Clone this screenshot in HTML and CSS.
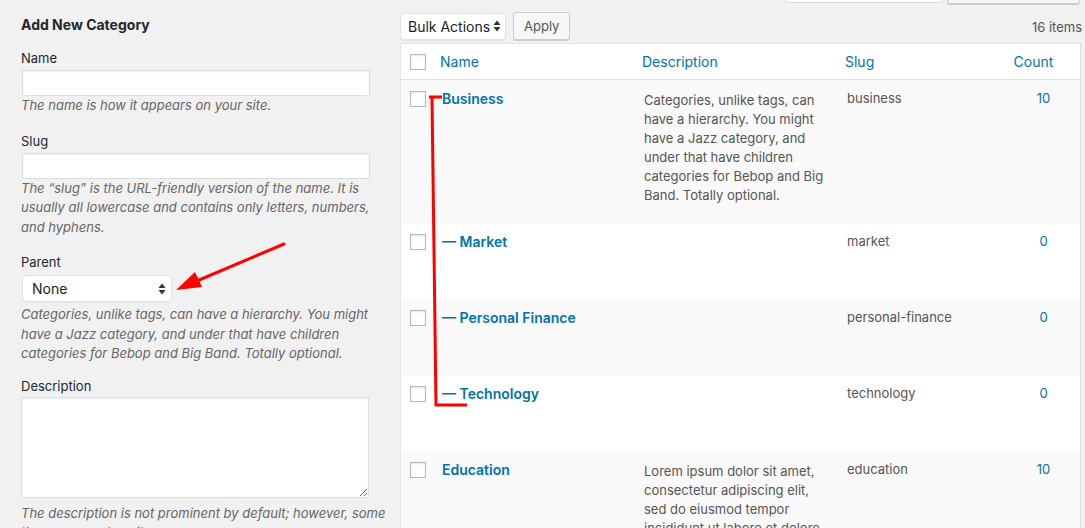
FILE: index.html
```html
<!DOCTYPE html>
<html lang="en">
<head>
  <meta charset="UTF-8">
  <title>Categories</title>
  <link rel="stylesheet" href="styles.css">
</head>
<body>
  <div class="page">
    <div class="col-left">
      <h2 class="form-title">Add New Category</h2>

      <div class="form-field">
        <label>Name</label>
        <input type="text" class="text-input">
        <p class="field-desc">The name is how it appears on your site.</p>
      </div>

      <div class="form-field">
        <label>Slug</label>
        <input type="text" class="text-input">
        <p class="field-desc">The “slug” is the URL-friendly version of the name. It is usually all lowercase and contains only letters, numbers, and hyphens.</p>
      </div>

      <div class="form-field">
        <label>Parent</label>
        <div class="fake-select parent-select">
          <span>None</span>
          <svg class="updown" width="8" height="12" viewBox="0 0 8 12"><path d="M4 0.5 L7.5 5 L0.5 5 Z M4 11.5 L7.5 7 L0.5 7 Z" fill="#333"/></svg>
        </div>
        <p class="field-desc field-desc-sel">Categories, unlike tags, can have a hierarchy. You might have a Jazz category, and under that have children categories for Bebop and Big Band. Totally optional.</p>
      </div>

      <div class="form-field field-area">
        <label>Description</label>
        <textarea class="text-area"></textarea>
        <p class="field-desc field-desc-area">The description is not prominent by default; however, some themes may show it.</p>
      </div>
    </div>

    <div class="col-right">
      <div class="search-box">
        <input type="search" class="search-input">
        <button class="search-btn">Search Categories</button>
      </div>

      <div class="tablenav">
        <div class="fake-select bulk-select">
          <span>Bulk Actions</span>
          <svg class="updown" width="8" height="12" viewBox="0 0 8 12"><path d="M4 0.5 L7.5 5 L0.5 5 Z M4 11.5 L7.5 7 L0.5 7 Z" fill="#333"/></svg>
        </div>
        <button class="btn">Apply</button>
        <div class="num-items">16 items</div>
      </div>

      <div class="cat-table">
        <div class="cat-row head-row">
          <div class="cell cb"><span class="checkbox"></span></div>
          <div class="cell head"><a>Name</a></div>
          <div class="cell head"><a>Description</a></div>
          <div class="cell head"><a>Slug</a></div>
          <div class="cell head count-head"><a>Count</a></div>
        </div>

        <div class="cat-row alt tall">
          <div class="cell cb"><span class="checkbox"></span></div>
          <div class="cell name"><a>Business</a></div>
          <div class="cell desc">Categories, unlike tags, can have a hierarchy. You might have a Jazz category, and under that have children categories for Bebop and Big Band. Totally optional.</div>
          <div class="cell slug">business</div>
          <div class="cell count"><a>10</a></div>
        </div>

        <div class="cat-row">
          <div class="cell cb"><span class="checkbox"></span></div>
          <div class="cell name"><a>— Market</a></div>
          <div class="cell desc"></div>
          <div class="cell slug">market</div>
          <div class="cell count"><a>0</a></div>
        </div>

        <div class="cat-row alt">
          <div class="cell cb"><span class="checkbox"></span></div>
          <div class="cell name"><a>— Personal Finance</a></div>
          <div class="cell desc"></div>
          <div class="cell slug">personal-finance</div>
          <div class="cell count"><a>0</a></div>
        </div>

        <div class="cat-row">
          <div class="cell cb"><span class="checkbox"></span></div>
          <div class="cell name"><a>— Technology</a></div>
          <div class="cell desc"></div>
          <div class="cell slug">technology</div>
          <div class="cell count"><a>0</a></div>
        </div>

        <div class="cat-row alt tall">
          <div class="cell cb"><span class="checkbox"></span></div>
          <div class="cell name"><a>Education</a></div>
          <div class="cell desc">Lorem ipsum dolor sit amet, consectetur adipiscing elit, sed do eiusmod tempor incididunt ut labore et dolore magna aliqua.</div>
          <div class="cell slug">education</div>
          <div class="cell count"><a>10</a></div>
        </div>
      </div>
    </div>
  </div>

  <!-- annotation marks drawn on top of the screenshot -->
  <svg class="marks" width="1085" height="528" viewBox="0 0 1085 528">
    <path d="M429 97 L442 97 M432 97 L436 405 L467 405" fill="none" stroke="#ff0000" stroke-width="3" stroke-linejoin="miter"/>
    <path d="M284 244 L192 283" fill="none" stroke="#ff0000" stroke-width="3" stroke-linecap="round"/>
    <polygon points="176,290 195,272 202,287" fill="#ff0000"/>
  </svg>
</body>
</html>
```

FILE: styles.css
```css
body {
  margin: 0;
  background: #f1f1f1;
  color: #444;
  font-family: Inter, "Noto Sans", sans-serif;
  font-size: 13px;
  overflow: hidden;
}
.page {
  display: flex;
  align-items: flex-start;
}
.col-left {
  width: 367px;
  margin-left: 21px;
  padding-top: 15px;
}
.form-title {
  margin: 0 0 13px;
  font-size: 14px;
  line-height: 20px;
  font-weight: 700;
  color: #23282d;
}
.form-field {
  display: flex;
  flex-direction: column;
  align-items: flex-start;
  margin-bottom: 15px;
}
.form-field label {
  line-height: 20px;
  color: #23282d;
  margin-bottom: 2px;
}
.field-area {
  margin-top: -3px;
}
.text-input {
  height: 26px;
  box-sizing: border-box;
  width: 348px;
  margin: 0 0 0 1px;
  border: 1px solid #ddd;
  box-shadow: inset 0 1px 2px rgba(0,0,0,.07);
  background: #fff;
  outline: none;
}
.field-desc {
  margin: 0;
  font-style: italic;
  color: #666;
  line-height: 19.5px;
}
.field-desc-sel {
  margin-top: 3px;
}
.field-desc-area {
  margin-top: 6px;
}
.fake-select {
  display: flex;
  align-items: center;
  justify-content: space-between;
  box-sizing: border-box;
  background: #fff;
  border: 1px solid #e2e2e2;
  border-radius: 5px;
  box-shadow: 0 1px 1px rgba(0,0,0,.05);
  color: #222;
  font-size: 14px;
}
.parent-select {
  width: 150px;
  height: 27px;
  margin: 1px 0 0 1px;
  padding: 0 5px 0 9px;
}
.text-area {
  width: 348px;
  height: 101px;
  box-sizing: border-box;
  margin: -1px 0 0;
  border: 1px solid #ddd;
  box-shadow: inset 0 1px 2px rgba(0,0,0,.07);
  background: #fff;
  outline: none;
}
.col-right {
  width: 681px;
  margin-left: 12px;
}
.search-box {
  display: flex;
  justify-content: flex-end;
  gap: 4px;
  margin-top: -25px;
  padding-right: 1px;
}
.search-input {
  width: 158px;
  height: 28px;
  box-sizing: border-box;
  border: 1px solid #ddd;
  background: #fff;
}
.search-btn {
  width: 133px;
  height: 29px;
  border: 1px solid #ccc;
  border-radius: 3px;
  background: #f7f7f7;
  box-shadow: 0 1px 0 #ccc;
  color: #555;
}
.tablenav {
  display: flex;
  align-items: center;
  gap: 7px;
  margin-top: 8px;
  margin-bottom: 3px;
  height: 28px;
}
.bulk-select {
  width: 106px;
  height: 27px;
  padding: 0 4px 0 7px;
  border-radius: 4px;
}
.btn {
  height: 28px;
  padding: 0 10px;
  border: 1px solid #ccc;
  border-radius: 3px;
  background: #f7f7f7;
  box-shadow: 0 1px 0 #ccc;
  color: #555;
  font-family: inherit;
  font-size: 13px;
}
.num-items {
  margin-left: auto;
  margin-right: -1px;
  margin-top: 2px;
  color: #555;
}
.cat-table {
  background: #fff;
  border: 1px solid #e5e5e5;
  border-right-color: #ddd;
  box-shadow: 0 1px 1px rgba(0,0,0,.04);
}
.cat-row {
  display: grid;
  grid-template-columns: 41px 202px 203px 159px 75px;
  height: 76px;
  box-sizing: border-box;
  line-height: 19px;
}
.cat-row.alt {
  background: #f9f9f9;
}
.cat-row.tall {
  height: 143px;
}
.head-row {
  height: 36px;
  border-bottom: 1px solid #e1e1e1;
  background: #fff;
  align-items: center;
}
.cell {
  padding-top: 9px;
}
.head-row .cell {
  padding-top: 0;
}
.cb {
  padding-left: 9px;
  padding-top: 11px;
}
.checkbox {
  display: block;
  width: 16px;
  height: 16px;
  box-sizing: border-box;
  border: 1px solid #b4b9be;
  background: #fff;
  box-shadow: inset 0 1px 2px rgba(0,0,0,.1);
}
.head a {
  color: #0073aa;
  font-size: 14px;
  margin-left: -2px;
}
.count-head {
  text-align: center;
  padding-right: 18px;
}
.name a {
  color: #0073aa;
  font-weight: 600;
  font-size: 14px;
}
.desc, .slug {
  color: #555;
}
.desc {
  padding-right: 20px;
  padding-top: 11px;
}
.count {
  text-align: center;
}
.count a {
  color: #0073aa;
}
.marks {
  position: absolute;
  left: 0;
  top: 0;
  pointer-events: none;
}
```
